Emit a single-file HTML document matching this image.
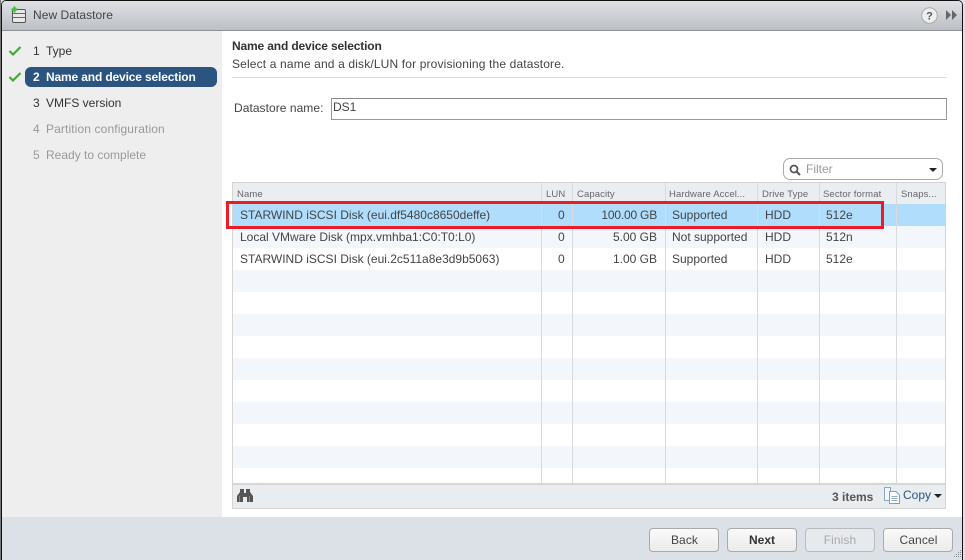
<!DOCTYPE html>
<html><head><meta charset="utf-8"><style>
html,body{margin:0;padding:0;width:965px;height:560px;overflow:hidden;background:#dfe3e8;}
*{box-sizing:border-box}
body{font-family:"Liberation Sans",sans-serif;font-size:12px;color:#333;position:relative}
.a{position:absolute;white-space:nowrap}
.t{position:absolute;white-space:nowrap;line-height:14px}
.btn{position:absolute;top:528px;width:70px;height:24px;border:1px solid #aaa;border-radius:4px;background:linear-gradient(#fafafa,#ebebeb);text-align:center;line-height:22px;color:#444}
.l{position:absolute;top:183px;height:300px;width:1px;background:#d8dbde}
.h{position:absolute;top:189px;font-size:9.5px;line-height:12px;color:#666;white-space:nowrap;letter-spacing:.1px}
.c{position:absolute;line-height:14px;white-space:nowrap;color:#444}
.cap{position:absolute;line-height:14px;white-space:nowrap;color:#444;right:308px}
.r{position:absolute;left:233px;width:712px;height:22px}
</style></head><body>
<div class="a" style="left:0;top:0;width:1px;height:560px;background:#777"></div>
<div class="a" style="left:1px;top:0;width:962px;height:560px;background:#111;border-radius:5px 5px 0 0"></div>
<div class="a" style="left:2px;top:1px;width:960px;height:559px;background:#fff;border-radius:4px 4px 0 0;overflow:hidden">
<div class="a" style="left:0;top:0;width:960px;height:30px;background:linear-gradient(#dfe1e4,#bcc0c5);border-bottom:1px solid #8f9396"></div>
<div class="a" style="left:0;top:30px;width:220px;height:486px;background:#eee"></div>
<div class="a" style="left:0;top:516px;width:960px;height:43px;background:#dce0e7"></div>
</div>
<svg class="a" style="left:10px;top:6px" width="18" height="18" viewBox="0 0 18 18">
<rect x="2.5" y="3.5" width="13" height="13" rx="1.5" fill="#e8e8e8" stroke="#555"/>
<path d="M3 7.5H15M3 11.5H15" stroke="#666"/>
<path d="M4.5 .5V6.5M1.5 3.5H7.5" stroke="#3cc13c" stroke-width="2.2"/>
</svg>
<div class="t" style="left:33px;top:8px;font-size:12px;color:#444;letter-spacing:.05px">New Datastore</div>
<svg class="a" style="left:921px;top:7px" width="17" height="17" viewBox="0 0 17 17"><circle cx="8.5" cy="8.5" r="7.8" fill="#eee" stroke="#aaa"/><text x="8.5" y="12.5" font-family="Liberation Sans" font-size="11" font-weight="bold" text-anchor="middle" fill="#555">?</text></svg>
<svg class="a" style="left:945px;top:10px" width="13" height="10" viewBox="0 0 13 10"><path d="M1 0L6 5L1 10ZM7 0L12 5L7 10Z" fill="#666"/></svg>

<svg class="a" style="left:8px;top:45px" width="14" height="12" viewBox="0 0 14 12"><path d="M1.5 6L5 9.5L12.5 2" fill="none" stroke="#3faa35" stroke-width="2.2"/></svg>
<svg class="a" style="left:8px;top:71px" width="14" height="12" viewBox="0 0 14 12"><path d="M1.5 6L5 9.5L12.5 2" fill="none" stroke="#3faa35" stroke-width="2.2"/></svg>
<div class="t" style="left:33px;top:44px;color:#333">1</div><div class="t" style="left:46px;top:44px;color:#333">Type</div>
<div class="a" style="left:25px;top:67px;width:192px;height:20px;background:#2b5481;border-radius:6px"></div>
<div class="t" style="left:33px;top:70px;color:#fff;font-weight:bold">2</div><div class="t" style="left:46px;top:70px;color:#fff;font-weight:bold;letter-spacing:-.15px">Name and device selection</div>
<div class="t" style="left:33px;top:96px;color:#333">3</div><div class="t" style="left:46px;top:96px;color:#333">VMFS version</div>
<div class="t" style="left:33px;top:122px;color:#999">4</div><div class="t" style="left:46px;top:122px;color:#999;letter-spacing:.12px">Partition configuration</div>
<div class="t" style="left:33px;top:148px;color:#999">5</div><div class="t" style="left:46px;top:148px;color:#999">Ready to complete</div>

<div class="t" style="left:232px;top:39px;font-weight:bold;color:#333;letter-spacing:-.15px">Name and device selection</div>
<div class="t" style="left:232px;top:57px;color:#444;letter-spacing:.15px">Select a name and a disk/LUN for provisioning the datastore.</div>
<div class="a" style="left:232px;top:77px;width:715px;height:1px;background:#d9d9d9"></div>
<div class="t" style="left:234px;top:101px;color:#444;letter-spacing:.05px">Datastore name:</div>
<div class="a" style="left:331px;top:98px;width:616px;height:22px;border:1px solid #999;border-top-color:#888;background:#fff"></div>
<div class="t" style="left:333px;top:100px;color:#444">DS1</div>

<div class="a" style="left:783px;top:158px;width:160px;height:22px;border:1px solid #aaa;border-radius:7px;background:#fff"></div>
<svg class="a" style="left:789px;top:164px" width="12" height="12" viewBox="0 0 12 12"><circle cx="5" cy="5" r="3.5" fill="none" stroke="#555" stroke-width="1.7"/><path d="M7.5 7.5L11 11" stroke="#555" stroke-width="2"/></svg>
<div class="t" style="left:806px;top:162px;color:#999">Filter</div>
<div class="a" style="left:929px;top:168px;width:0;height:0;border-left:4px solid transparent;border-right:4px solid transparent;border-top:4px solid #222"></div>

<div class="a" style="left:232px;top:182px;width:714px;height:327px;border:1px solid #d4d4d4;background:#fff"></div>
<div class="a" style="left:233px;top:183px;width:712px;height:21px;background:#ebeef1"></div>
<div class="r" style="top:204px;background:#b1ddfd"></div>
<div class="r" style="top:226px;background:#f3f6fa"></div>
<div class="r" style="top:270px;background:#f3f6fa"></div>
<div class="r" style="top:314px;background:#f3f6fa"></div>
<div class="r" style="top:358px;background:#f3f6fa"></div>
<div class="r" style="top:402px;background:#f3f6fa"></div>
<div class="r" style="top:446px;background:#f3f6fa"></div>
<div class="l" style="left:541px"></div><div class="l" style="left:572px"></div><div class="l" style="left:665px"></div><div class="l" style="left:757px"></div><div class="l" style="left:819px"></div><div class="l" style="left:896px"></div>
<div class="a" style="left:233px;top:483px;width:712px;height:25px;background:#e9edf0;border-top:2px solid #d4d6d8"></div>

<div class="h" style="left:237px">Name</div><div class="h" style="left:546px">LUN</div><div class="h" style="left:577px">Capacity</div><div class="h" style="left:669px">Hardware Accel...</div><div class="h" style="left:762px">Drive Type</div><div class="h" style="left:823px">Sector format</div><div class="h" style="left:901px">Snaps...</div>

<div class="c" style="left:240px;top:208px">STARWIND iSCSI Disk (eui.df5480c8650deffe)</div>
<div class="c" style="left:558px;top:208px">0</div><div class="cap" style="top:208px;letter-spacing:-.2px">100.00 GB</div><div class="c" style="left:672px;top:208px">Supported</div><div class="c" style="left:765px;top:208px">HDD</div><div class="c" style="left:826px;top:208px">512e</div>
<div class="c" style="left:240px;top:230px">Local VMware Disk (mpx.vmhba1:C0:T0:L0)</div>
<div class="c" style="left:558px;top:230px">0</div><div class="cap" style="top:230px">5.00 GB</div><div class="c" style="left:672px;top:230px">Not supported</div><div class="c" style="left:765px;top:230px">HDD</div><div class="c" style="left:826px;top:230px">512n</div>
<div class="c" style="left:240px;top:252px">STARWIND iSCSI Disk (eui.2c511a8e3d9b5063)</div>
<div class="c" style="left:558px;top:252px">0</div><div class="cap" style="top:252px">1.00 GB</div><div class="c" style="left:672px;top:252px">Supported</div><div class="c" style="left:765px;top:252px">HDD</div><div class="c" style="left:826px;top:252px">512e</div>

<div class="a" style="left:226px;top:201px;width:658px;height:28px;border:3px solid #ed1c24"></div>

<svg class="a" style="left:237px;top:488px" width="16" height="15" viewBox="0 0 16 15"><path d="M3 1H7V5H9V1H13V4L16 8V14H10V9H6V14H0V8L3 4Z" fill="#555"/><path d="M2.5 8V14M12.5 8V14" stroke="#888"/></svg>
<div class="t" style="left:832px;top:490px;color:#555;font-weight:bold;font-size:12px">3 items</div>
<svg class="a" style="left:884px;top:487px" width="17" height="17" viewBox="0 0 17 17"><path d="M.5.5H6.5V13.5H.5Z" fill="#f5f8fb" stroke="#8aa6c4"/><path d="M5.5 4.5H12L15.5 8V16.5H5.5Z" fill="#fff" stroke="#7f9dbd"/><path d="M7.5 9.5H13.5M7.5 11.5H13.5M7.5 13.5H13.5" stroke="#93abc6"/></svg>
<div class="t" style="left:903px;top:488px;color:#2b5481">Copy</div>
<div class="a" style="left:934px;top:494px;width:0;height:0;border-left:4px solid transparent;border-right:4px solid transparent;border-top:4px solid #222"></div>

<div class="btn" style="left:649px;padding-left:1px;letter-spacing:.1px">Back</div>
<div class="btn" style="left:727px;font-weight:bold;color:#333">Next</div>
<div class="btn" style="left:805px;color:#aaa;border-color:#bbb;background:#e6e9ed;letter-spacing:.1px">Finish</div>
<div class="btn" style="left:883px;padding-left:1px;letter-spacing:.1px">Cancel</div>
<svg class="a" style="left:952px;top:549px" width="10" height="10" viewBox="0 0 10 10"><path d="M8 1h1v1H8zM6 3h1v1H6zM8 3h1v1H8zM4 5h1v1H4zM6 5h1v1H6zM8 5h1v1H8zM2 7h1v1H2zM4 7h1v1H4zM6 7h1v1H6zM8 7h1v1H8z" fill="#8a8f96"/></svg>
</body></html>
